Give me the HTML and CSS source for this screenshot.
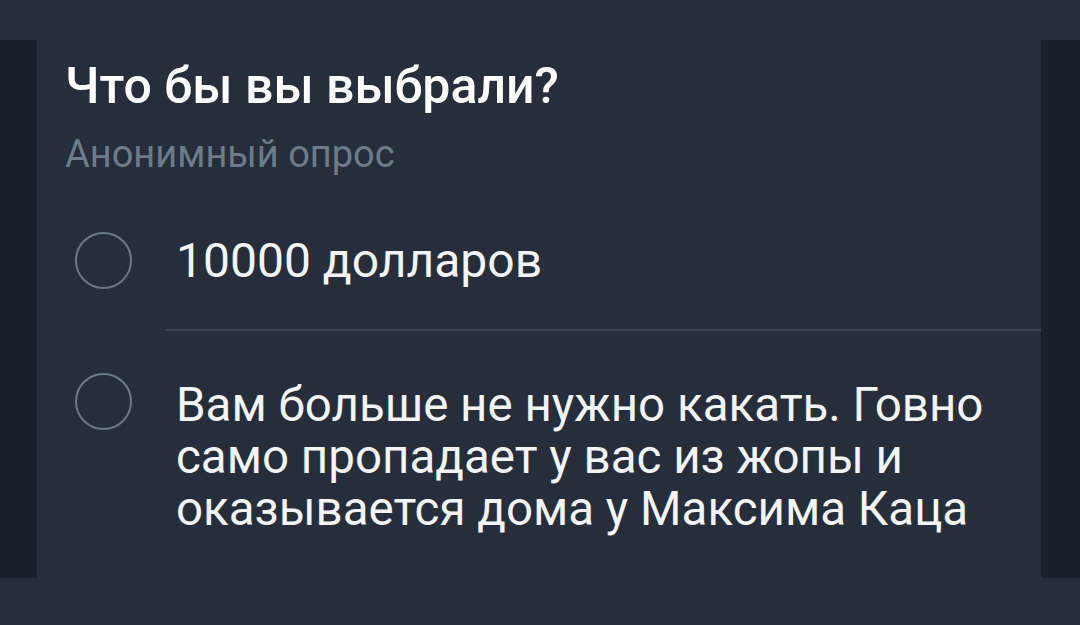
FILE: index.html
```
<!DOCTYPE html>
<html lang="ru">
<head>
<meta charset="utf-8">
<link rel="stylesheet" href="styles.css">
</head>
<body>
<div class="frame">
  <div class="strip"></div>
  <div class="poll">
    <h1 class="title">Что бы вы выбрали?</h1>
    <div class="subtitle">Анонимный опрос</div>
    <div class="option first">
      <span class="radio"></span>
      <div class="label">10000 долларов</div>
    </div>
    <div class="divider"></div>
    <div class="option second">
      <span class="radio"></span>
      <div class="label">Вам больше не нужно какать. Говно<br>само пропадает у вас из жопы и<br>оказывается дома у Максима Каца</div>
    </div>
  </div>
  <div class="strip right"></div>
</div>
</body>
</html>
```
FILE: styles.css
```
html, body {
  margin: 0;
  padding: 0;
  background: #252e3a;
  width: 1080px;
  height: 625px;
  overflow: hidden;
  font-family: Roboto, "Noto Sans", sans-serif;
}
.frame {
  display: flex;
  margin-top: 40px;
  height: 538px;
}
.strip {
  width: 37px;
  background: #18202a;
  flex: none;
}
.strip.right {
  width: 39px;
}
.poll {
  flex: 1;
  padding-left: 28px;
  display: flex;
  flex-direction: column;
}
.title {
  margin: 16px 0 0 0;
  font-size: 50px;
  font-weight: 500;
  color: #ffffff;
  line-height: 60px;
  white-space: nowrap;
}
.subtitle {
  margin-top: 15px;
  font-size: 38px;
  color: #6e7b89;
  line-height: 46px;
}
.option {
  display: flex;
  align-items: flex-start;
}
.option.first {
  margin-top: 55px;
}
.radio {
  width: 53px;
  height: 53px;
  border: 2px solid #6a7888;
  border-radius: 50%;
  flex: none;
  margin-left: 10px;
}
.label {
  margin-left: 44px;
  font-size: 47.5px;
  line-height: 52px;
  color: #f2f4f6;
  white-space: nowrap;
}
.option.first .label {
  font-size: 48px;
  line-height: 56px;
  margin-top: 1px;
}
.option.second .label {
  margin-top: 6px;
}
.divider {
  margin: 40px 0 0 100px;
  height: 2px;
  background: #3b4655;
}
.option.second {
  margin-top: 42px;
}
```
